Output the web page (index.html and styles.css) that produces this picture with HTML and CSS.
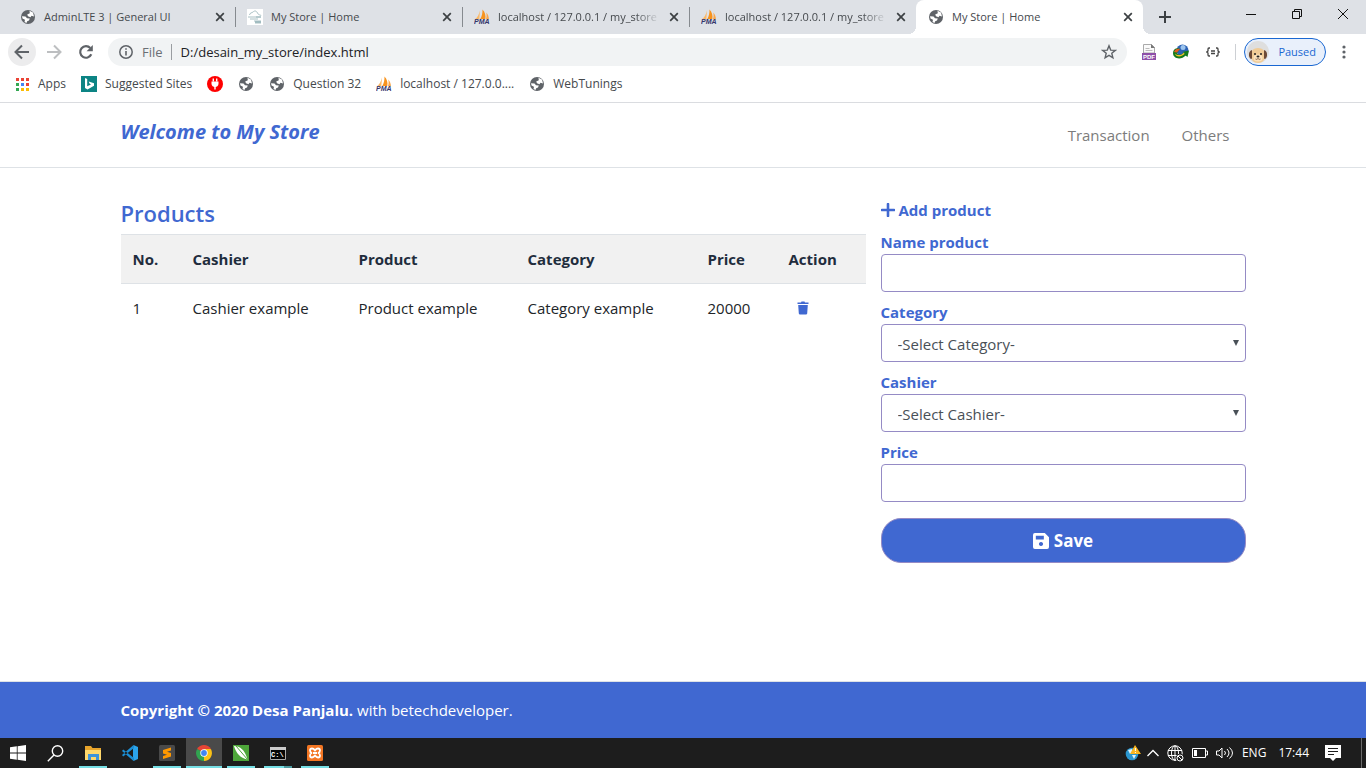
FILE: index.html
```html
<!DOCTYPE html>
<html lang="en">
<head>
<meta charset="utf-8">
<meta name="viewport" content="width=device-width, initial-scale=1">
<title>My Store | Home</title>
<link rel="stylesheet" href="styles.css">
</head>
<body>
<svg class="defs" width="0" height="0" aria-hidden="true">
  <symbol id="globe" viewBox="0 0 16 16">
    <circle cx="8" cy="8" r="7" fill="#5f6368"/>
    <path d="M9.500 1.800 13 3.500 14 7.500 11.500 6.800 10.500 8.200 8 7.200 7.200 5.500 9.800 4.200Z" fill="#fff"/>
    <path d="M2 7.200 5.500 7.500 7 9.200 9.800 9.500 9 11.500 7.200 12.200 6.500 14 4.500 13 5 10.800 2.500 9.500Z" fill="#fff"/>
  </symbol>
  <symbol id="pma" viewBox="0 0 16 16">
    <path d="M6 1.500 5.300 10 0.800 10.500C3.500 8.500 5 5.500 6 1.500Z" fill="#fbb866"/>
    <path d="M8.500 0.500C11 3 12 6.500 11.300 10L6.300 10C8 7 8.600 4 8.500 0.500Z" fill="#f7931e"/>
    <path d="M12.300 3.500C14 5.500 15 8 15 10.500L12 10C12.700 8 12.800 6 12.300 3.500Z" fill="#f9a64a"/>
    <text x="0" y="15" font-family="Liberation Sans, sans-serif" font-size="7" font-weight="700" font-style="italic" fill="#34346b">PMA</text>
  </symbol>
  <symbol id="close" viewBox="0 0 10 10"><path d="M1.200 1.200 8.800 8.800M8.800 1.200 1.200 8.800" stroke="#3c4043" stroke-width="1.700"/></symbol>
</svg>

<nav class="tabs" aria-label="Tabs">
  <div class="tab"><svg class="fav"><use href="#globe"/></svg><span class="tab-name">AdminLTE 3 | General UI</span><button class="tab-close" aria-label="Close tab"><svg width="10" height="10"><use href="#close"/></svg></button></div>
  <div class="tab divided"><svg class="fav" viewBox="0 0 16 16"><path fill="#fff" d="M0 0h16v16H0z"/><path d="M2.500 6C3 3.500 5 4 6 3s3-2 4.500 1 3 1 3.500 3M1 8h8M3 10h8M7 12h7M8 14h6" fill="none" stroke="#a9c0c4"/><path d="M9 8h5M8 13h6" stroke="#6f979e"/></svg><span class="tab-name">My Store | Home</span><button class="tab-close" aria-label="Close tab"><svg width="10" height="10"><use href="#close"/></svg></button></div>
  <div class="tab divided"><svg class="fav"><use href="#pma"/></svg><span class="tab-name faded">localhost / 127.0.0.1 / my_store</span><button class="tab-close" aria-label="Close tab"><svg width="10" height="10"><use href="#close"/></svg></button></div>
  <div class="tab divided"><svg class="fav"><use href="#pma"/></svg><span class="tab-name faded">localhost / 127.0.0.1 / my_store</span><button class="tab-close" aria-label="Close tab"><svg width="10" height="10"><use href="#close"/></svg></button></div>
  <div class="tab active"><svg class="fav"><use href="#globe"/></svg><span class="tab-name">My Store | Home</span><button class="tab-close" aria-label="Close tab"><svg width="10" height="10"><use href="#close"/></svg></button></div>
  <button class="new-tab" aria-label="New tab"><svg width="14" height="14" viewBox="0 0 14 14"><path d="M7 1v12M1 7h12" stroke="#3c4043" stroke-width="2"/></svg></button>
  <div class="window-buttons">
    <button aria-label="Minimize"><svg width="10" height="10"><path d="M0 5.500h10" stroke="#111"/></svg></button>
    <button aria-label="Restore"><svg width="10" height="10" fill="none" stroke="#111"><path d="M.5 2.500h7v7h-7zM2.500 2.500v-2h7v7h-2"/></svg></button>
    <button aria-label="Close"><svg width="10" height="10"><path d="M0 0 10 10M10 0 0 10" stroke="#111"/></svg></button>
  </div>
</nav>

<div class="toolbar">
  <button class="nav-button back" aria-label="Back"><svg width="16" height="16" viewBox="0 0 16 16" fill="none" stroke="#5f6368" stroke-width="2"><path d="M15 8H2M8 1.500 1.500 8 8 14.500"/></svg></button>
  <button class="nav-button" aria-label="Forward"><svg width="16" height="16" viewBox="0 0 16 16" fill="none" stroke="#bdbfc1" stroke-width="2"><path d="M1 8h13M8 1.500 14.500 8 8 14.500"/></svg></button>
  <button class="nav-button" aria-label="Reload"><svg width="16" height="16" viewBox="0 0 16 16"><path d="M13.300 10.300A5.800 5.800 0 1 1 12.300 4" fill="none" stroke="#5f6368" stroke-width="2.200"/><path d="M14.800 1v6.200H8.600Z" fill="#5f6368"/></svg></button>
  <div class="omnibox">
    <svg width="14" height="14" viewBox="0 0 14 14"><circle cx="7" cy="7" r="6.200" fill="none" stroke="#5f6368" stroke-width="1.500"/><path d="M7 6v4.500M7 3.200v1.600" stroke="#5f6368" stroke-width="1.600"/></svg>
    <span class="scheme">File</span>
    <input class="address" aria-label="Address" value="D:/desain_my_store/index.html">
    <button class="star" aria-label="Bookmark"><svg width="16" height="16" viewBox="0 0 16 16"><path d="M8 1.800 9.700 6.100 14.300 6.400 10.800 9.300 11.900 13.800 8 11.400 4.100 13.800 5.200 9.300 1.700 6.400 6.300 6.100Z" fill="none" stroke="#5f6368" stroke-width="1.400"/></svg></button>
  </div>
  <div class="extensions">
    <button aria-label="PDF"><svg width="16" height="16" viewBox="0 0 16 16"><path d="M2.500.5h8l3 3V9h-11z" fill="#fafafa" stroke="#aaa"/><path d="M10 0v4h4" fill="#777"/><path d="M4.500 4.500h4M4.500 6.500h7" stroke="#bbb"/><path d="M1 9h14v7H1z" fill="#8e4fa8"/><text x="2" y="15" font-family="Liberation Sans, sans-serif" font-size="6" font-weight="700" fill="#fff">PDF</text></svg></button>
    <button aria-label="Download manager"><svg width="16" height="16" viewBox="0 0 16 16"><circle cx="9.500" cy="6.500" r="6" fill="#2c62b4"/><circle cx="10" cy="3.500" r="2.500" fill="#9cc4ee"/><path d="M0 9C0 5 4 3 7 5L4 9C5 11.500 9 11 11 8.500L9 8 16 6.500 14.500 13 12.500 11.500C9 16 0 15.500 0 9Z" fill="#157a1c"/><path d="M1 8C2 5 5 4 7 5L4 8.500Z" fill="#e65a23"/><path d="M2 9.500C4 12 9 11.500 11 8.500L11.500 10C8 13.500 2.500 13 2 9.500Z" fill="#f1c329"/></svg></button>
    <button aria-label="JSON viewer"><svg width="14" height="10" viewBox="0 0 14 10" fill="none" stroke="#444" stroke-width="1.300"><path d="M4 1H3Q2 1 2 2V4L.8 5 2 6V8Q2 9 3 9H4M10 1h1q1 0 1 1v2l1.200 1L12 6v2q0 1-1 1h-1M5 4h4M5 6.500h4"/></svg></button>
  </div>
  <button class="profile"><svg width="22" height="22" viewBox="0 0 22 22"><circle cx="11" cy="11" r="11" fill="#dedede"/><path d="M4 14Q4 7 11 7t7 7Q18 22 11 22T4 14Z" fill="#f0cb96"/><path d="M5 9Q1.500 10 2 15q1 4 3 2.500ZM17 9q3.500 1 3 6-1 4-3 2.500Z" fill="#6c4a37"/><ellipse cx="11" cy="17" rx="4.500" ry="3.500" fill="#fbe2bd"/><circle cx="8" cy="13" r="1" fill="#222"/><circle cx="14" cy="13" r="1" fill="#222"/><ellipse cx="11" cy="15.500" rx="1.500" ry="1" fill="#222"/><path d="M8.500 18q1.200 1 2.500-.5 1.300 1.500 2.500.5" fill="none" stroke="#6c4a37" stroke-width=".8"/></svg>Paused</button>
  <button class="more" aria-label="Menu"><svg width="4" height="14" viewBox="0 0 4 14" fill="#5f6368"><circle cx="2" cy="2" r="1.600"/><circle cx="2" cy="7" r="1.600"/><circle cx="2" cy="12" r="1.600"/></svg></button>
</div>

<nav class="bookmarks" aria-label="Bookmarks">
  <a href="#"><svg class="fav" viewBox="0 0 16 16"><g fill="#ea4335"><path d="M2 2h3v3H2zM7 2h3v3H7zM12 2h3v3h-3z"/></g><path d="M2 7h3v3H2z" fill="#34a853"/><path d="M7 7h3v3H7z" fill="#4285f4"/><path d="M12 7h3v3h-3z" fill="#ea4335"/><path d="M2 12h3v3H2z" fill="#34a853"/><path d="M7 12h3v3H7zM12 12h3v3h-3z" fill="#fbbc05"/></svg>Apps</a>
  <a href="#"><svg class="fav" viewBox="0 0 16 16"><path fill="#0c8484" d="M0 0h16v16H0z"/><path d="M4 2 6.200 3v7.200L10 8.500 8.500 7.500 7.700 5.500 13 7.300v2.500L6.500 13.500 4 12Z" fill="#fff"/></svg>Suggested Sites</a>
  <a href="#" aria-label="Plug"><svg class="fav" viewBox="0 0 16 16"><circle cx="8" cy="8" r="8" fill="#f00"/><path d="M6.300 2.500v3M9.700 2.500v3M8 10v3.500" stroke="#fff" stroke-width="1.400"/><path d="M4.500 5.500h7v2.500Q11 11 8 11T4.500 8Z" fill="#fff"/></svg></a>
  <a href="#" aria-label="Website"><svg class="fav"><use href="#globe"/></svg></a>
  <a href="#"><svg class="fav"><use href="#globe"/></svg>Question 32</a>
  <a href="#"><svg class="fav"><use href="#pma"/></svg>localhost / 127.0.0....</a>
  <a href="#"><svg class="fav"><use href="#globe"/></svg>WebTunings</a>
</nav>

<header class="site-header">
  <div class="container">
    <a class="brand" href="#">Welcome to My Store</a>
    <nav class="site-nav"><a href="#">Transaction</a><a href="#">Others</a></nav>
  </div>
</header>

<main class="container content">
  <section>
    <h1>Products</h1>
    <table>
      <colgroup><col class="c-no"><col class="c-cashier"><col class="c-product"><col class="c-category"><col class="c-price"><col class="c-action"></colgroup>
      <thead><tr><th>No.</th><th>Cashier</th><th>Product</th><th>Category</th><th>Price</th><th>Action</th></tr></thead>
      <tbody><tr><td>1</td><td>Cashier example</td><td>Product example</td><td>Category example</td><td>20000</td>
        <td><button class="delete" aria-label="Delete"><svg width="12" height="14" viewBox="0 0 12 14" fill="#4068d1"><path d="M.5 1.500H4L4.500.5h3l.5 1h3.500V3H.5zM1.200 4h9.600l-.6 8.500q-.1 1-1.200 1H3q-1.100 0-1.200-1z"/></svg></button></td></tr></tbody>
    </table>
  </section>
  <form class="product-form">
    <h2><svg width="14" height="14" viewBox="0 0 14 14"><path d="M7 1v12M1 7h12" stroke="#4068d1" stroke-width="2.600" stroke-linecap="round"/></svg>Add product</h2>
    <div class="field"><label for="name">Name product</label><input id="name" type="text"></div>
    <div class="field"><label for="category">Category</label><div class="select"><select id="category"><option>-Select Category-</option></select></div></div>
    <div class="field"><label for="cashier">Cashier</label><div class="select"><select id="cashier"><option>-Select Cashier-</option></select></div></div>
    <div class="field"><label for="price">Price</label><input id="price" type="text"></div>
    <button class="save" type="button"><svg width="16" height="16" viewBox="0 0 17 17"><path d="M2 0h10.500L17 4.500V15q0 2-2 2H2q-2 0-2-2V2Q0 0 2 0ZM3 3v4h8.500V3ZM8.500 9.500a2.200 2.200 0 1 0 .01 0Z" fill="#fff" fill-rule="evenodd"/></svg>Save</button>
  </form>
</main>

<footer class="site-footer"><div class="container"><p><strong>Copyright © 2020 Desa Panjalu.</strong> with betechdeveloper.</p></div></footer>

<div class="taskbar">
  <div class="apps">
    <button aria-label="Start"><svg width="16" height="16" viewBox="0 0 16 16" fill="#fff"><path d="M0 2.300 6.800 1.300V7.600H0zM7.600 1.200 16 0v7.600H7.600zM0 8.400h6.800v6.300L0 13.700zM7.600 8.400H16V16l-8.400-1.200z"/></svg></button>
    <button class="search" aria-label="Search"><svg width="17" height="17" viewBox="0 0 17 17" fill="none" stroke="#fff" stroke-width="1.400"><circle cx="10.500" cy="6" r="5.200"/><path d="M7 10 .8 16.200"/></svg></button>
    <button class="running" aria-label="File Explorer"><svg width="18" height="16" viewBox="0 0 18 16"><path d="M1 1h6l1.500 2H17v12H1z" fill="#e8a52c"/><path d="M1 5h16v10H1z" fill="#ffd86b"/><path d="M4 9h11v6h-3v-3H7v3H4z" fill="#3d94da"/></svg></button>
    <button aria-label="Visual Studio Code"><svg width="16" height="16" viewBox="0 0 16 16"><path d="M11.500 0 16 2v12l-4.500 2-.5-4V4z" fill="#2ba4ec"/><path d="M1.200 4.500 12 13 11.500 16 0 6zM1.200 11.500 12 3 11.500 0 0 10z" fill="#1b8fd6"/></svg></button>
    <button class="running" aria-label="Sublime Text"><svg width="16" height="16" viewBox="0 0 16 16"><rect width="16" height="16" rx="1.500" fill="#494949"/><path d="M12 2.500v3L8 6.700l4 1.300v3.500L4 14v-3l4-1.300-4-1.300V5z" fill="#ff9800"/></svg></button>
    <button class="running current" aria-label="Chrome"><svg width="16" height="16" viewBox="0 0 16 16"><path d="M8 8 1.100 4A8 8 0 0 1 14.900 4Z" fill="#e64435"/><path d="M8 8 14.900 4A8 8 0 0 1 8 16Z" fill="#fbc116"/><path d="M8 8 8 16A8 8 0 0 1 1.100 4Z" fill="#31a350"/><path d="M8 4h6.900L11 9.500z" fill="#fbc116"/><circle cx="8" cy="8" r="3.700" fill="#fff"/><circle cx="8" cy="8" r="2.900" fill="#4285f4"/></svg></button>
    <button class="running" aria-label="CorelDRAW"><svg width="16" height="16" viewBox="0 0 16 16"><path d="M0 0h16v16H0z" fill="#4da53a"/><path d="M1 1C7 1 12 5 14.500 14.500C7 13 3 8 1 1Z" fill="#fff"/><path d="M3 1 14.500 14.500" stroke="#4da53a"/></svg></button>
    <button class="running grouped" aria-label="Command Prompt"><svg width="16" height="13" viewBox="0 0 16 13"><path d="M.5.5h15v12H.5z" fill="#050505" stroke="#aaa"/><path d="M0 0h16v3H0z" fill="#ccc"/><text x="1" y="10" font-family="Liberation Mono, monospace" font-size="7" font-weight="700" fill="#fff">C:\</text></svg></button>
    <button class="running" aria-label="XAMPP"><svg width="16" height="16" viewBox="0 0 16 16"><rect width="16" height="16" rx="1.500" fill="#f37623"/><path d="M5 8Q3 7.500 3 5.500T5 3.500Q6.500 3.500 8 5.300 9.500 3.500 11 3.500q2 0 2 2T11 8q2 .5 2 2.500t-2 2q-1.500 0-3-1.800-1.500 1.800-3 1.800-2 0-2-2T5 8ZM6 8h4" fill="none" stroke="#fff" stroke-width="1.800"/></svg></button>
  </div>
  <div class="tray">
    <svg class="warning" width="16" height="16" viewBox="0 0 16 16"><circle cx="7" cy="9" r="6.300" fill="#2a96cf"/><path d="M3 5 7 4l1 3-3 2zM7 10l4 0-2 4z" fill="#dff3fc"/><path d="M10 0 16 9H5z" fill="#f9b51f"/><path d="M10.400 3v3M10.400 7v1" stroke="#fff"/></svg>
    <svg width="12" height="8" viewBox="0 0 12 8" fill="none" stroke="#fff" stroke-width="1.300"><path d="M.5 7 6 1.500 11.500 7"/></svg>
    <svg width="17" height="17" viewBox="0 0 17 17" fill="none" stroke="#fff"><circle cx="8" cy="8" r="7.200"/><ellipse cx="8" cy="8" rx="3.500" ry="7.200"/><path d="M8 1v15M1 5.500h14M1 10.500h14"/><circle cx="13" cy="13" r="4.300" fill="#1d1d1d" stroke="none"/><circle cx="13" cy="13" r="3"/><path d="m11 11 4 4"/></svg>
    <svg width="16" height="10" viewBox="0 0 16 10" fill="none" stroke="#fff"><path d="M.5.5h13v9H.5zM13.500 3h2v4h-2"/><path d="M2 2h3v6H2z" fill="#fff" stroke="none"/></svg>
    <svg width="18" height="14" viewBox="0 0 18 14" fill="none" stroke="#fff"><path d="M.5 5h2.500l3-3v10l-3-3H.5zM8.500 5q2 2 0 4M11 3q4 4 0 8M13.500 1.500q6 5.500 0 11"/></svg>
    <span class="tray-text">ENG</span>
    <time class="tray-text clock">17:44</time>
    <svg class="notice" width="16" height="16" viewBox="0 0 16 16"><path d="M0 0h16v13h-5l-3 3-3-3H0z" fill="#fff"/><path d="M3 3.500h10M3 6.500h10M3 9.500h6" stroke="#1d1d1d"/></svg>
  </div>
</div>
</body>
</html>
```
FILE: styles.css
```css
* { box-sizing: border-box; }
body {
  margin: 0;
  min-height: 100vh;
  display: flex;
  flex-direction: column;
  background: #fff;
  color: #212529;
  font: 400 15px/24px "Open Sans", "Noto Sans", sans-serif;
}
button, input, select { font: inherit; color: inherit; }
button { border: 0; padding: 0; background: none; }
a { color: inherit; text-decoration: none; }
svg { flex: none; display: block; }
.defs { display: none; }
.fav { width: 16px; height: 16px; }

/* browser tabs */
.tabs {
  display: flex;
  height: 34px;
  padding-left: 8px;
  background: #dee1e6;
  color: #45494d;
  font-size: 11px;
}
.tab {
  flex: 0 1 227px;
  min-width: 0;
  display: flex;
  align-items: center;
  gap: 8px;
  padding: 0 9px 0 12px;
  position: relative;
}
.tab.divided::before {
  content: "";
  position: absolute;
  left: 0;
  top: 7px;
  width: 1px;
  height: 20px;
  background: #868a8f;
}
.tab-name { flex: 1; min-width: 0; white-space: nowrap; }
.tab-name.faded { mask-image: linear-gradient(to right, #000 85%, transparent); }
.tab-close { width: 12px; height: 12px; display: grid; place-items: center; }
.tab.active { background: #fff; border-radius: 8px 8px 0 0; }
.tab.active::before, .tab.active::after {
  content: "";
  position: absolute;
  bottom: 0;
  width: 8px;
  height: 8px;
}
.tab.active::before { right: 100%; background: radial-gradient(circle at 0 0, #dee1e6 8px, #fff 8px); }
.tab.active::after { left: 100%; background: radial-gradient(circle at 100% 0, #dee1e6 8px, #fff 8px); }
.new-tab { width: 44px; display: grid; place-items: center; }
.window-buttons { display: flex; margin-left: auto; height: 28px; }
.window-buttons button { width: 46px; display: grid; place-items: center; }

/* toolbar */
.toolbar {
  display: flex;
  align-items: center;
  height: 36px;
  padding: 0 20px 0 8px;
}
.nav-button { width: 28px; height: 28px; margin-right: 4px; border-radius: 50%; display: grid; place-items: center; }
.nav-button.back { background: #ececed; }
.omnibox {
  flex: 1;
  display: flex;
  align-items: center;
  height: 28px;
  margin-left: 4px;
  padding: 0 10px 0 11px;
  border-radius: 14px;
  background: #f1f3f4;
  font-size: 13px;
}
.scheme { margin-left: 9px; padding-right: 8px; border-right: 1px solid #9a9da1; line-height: 16px; color: #6b6f74; }
.address { flex: 1; min-width: 0; border: 0; padding: 0 9px; background: none; color: #202124; }
.extensions { display: flex; gap: 16px; padding: 0 14px; margin-right: 8px; border-right: 1px solid #cdd0d4; height: 16px; }
.extensions button { width: 16px; display: grid; place-items: center; }
.profile {
  display: flex;
  align-items: center;
  gap: 9px;
  height: 28px;
  padding: 0 9px 0 2px;
  border: 1px solid #1967d2;
  border-radius: 14px;
  background: #e9f0fb;
  color: #1967d2;
  font-size: 11px;
}
.more { margin-left: 16px; }

/* bookmarks */
.bookmarks {
  display: flex;
  align-items: center;
  gap: 15px;
  height: 33px;
  padding: 0 14px 5px;
  border-bottom: 1px solid #dadce0;
  color: #45494d;
  font-size: 12px;
  white-space: nowrap;
}
.bookmarks a { display: flex; align-items: center; gap: 8px; }

/* store page */
.container { width: 100%; max-width: 1125px; margin: 0 auto; }
.site-header { border-bottom: 1px solid #dee2e6; }
.site-header .container { display: flex; justify-content: space-between; height: 64px; padding: 14px 0; }
.brand { color: #4068d1; font-size: 20px; font-weight: 700; font-style: italic; line-height: 30px; }
.site-nav { display: flex; gap: 32px; padding: 0 16px; color: #7c7c7c; line-height: 36px; }

.content {
  flex: 1;
  display: grid;
  grid-template-columns: 149fr 73fr;
  gap: 15px;
  align-items: start;
  padding-top: 30px;
}
h1, h2, p { margin: 0; }
h1 { margin-bottom: 6px; color: #4068d1; font-size: 22px; font-weight: 600; line-height: 30px; }
table { width: 100%; table-layout: fixed; border-collapse: collapse; }
th, td { padding: 12px; text-align: left; border-top: 1px solid #dee2e6; white-space: nowrap; }
th { background: #f1f1f1; color: #1f2d3d; font-weight: 700; }
.c-no { width: 60px; }
.c-cashier { width: 166px; }
.c-product { width: 169px; }
.c-category { width: 180px; }
.c-price { width: 81px; }
.c-action { width: 89px; }
.delete { display: block; padding: 0 8px; }

.product-form { display: flex; flex-direction: column; color: #4068d1; }
h2 { display: flex; align-items: center; gap: 4px; margin-bottom: 8px; font-size: 15px; font-weight: 700; line-height: 24px; }
.field { margin-bottom: 8px; }
.field label { display: block; font-weight: 700; }
.field input, .field select {
  display: block;
  width: 100%;
  height: 38px;
  padding: 2px 16px 0;
  border: 1px solid #958bc5;
  border-radius: 4px;
  background: #fff;
  color: #495057;
  appearance: none;
}
.select { position: relative; }
.select::after {
  content: "";
  position: absolute;
  right: 7px;
  top: 16px;
  border: solid transparent;
  border-width: 6px 3px 0;
  border-top-color: #495057;
}
.save {
  display: flex;
  align-items: center;
  justify-content: center;
  gap: 5px;
  height: 45px;
  margin-top: 8px;
  border: 1px solid #958bc5;
  border-radius: 20px;
  background: #4068d1;
  color: #fff;
  font-size: 17px;
  font-weight: 700;
}
.site-footer { padding: 16px 0; border-top: 1px solid #dee2e6; background: #4068d1; color: #fff; }
.site-footer strong { font-weight: 700; }

/* taskbar */
.taskbar { display: flex; justify-content: space-between; height: 30px; padding-right: 4px; background: #1d1d1d; color: #fff; }
.apps { display: flex; gap: 1px; }
.apps button { width: 36px; display: grid; place-items: center; position: relative; }
.apps .search { margin-right: 1px; }
.apps .running::after {
  content: "";
  position: absolute;
  left: 4px;
  right: 4px;
  bottom: 0;
  height: 2px;
  background: #76dfe5;
}
.apps .current { background: #4a4a4a; }
.apps .current::after { left: 0; right: 0; }
.apps .grouped::after { background: linear-gradient(to right, #76dfe5 70%, #4d9ba0 70%); }
.tray { display: flex; align-items: center; gap: 8px; padding-right: 20px; border-right: 1px solid #6a6a6a; }
.tray-text { font-size: 12px; }
.warning { margin-right: -2px; }
.clock { margin-left: 4px; }
.notice { margin-left: 8px; }
```
